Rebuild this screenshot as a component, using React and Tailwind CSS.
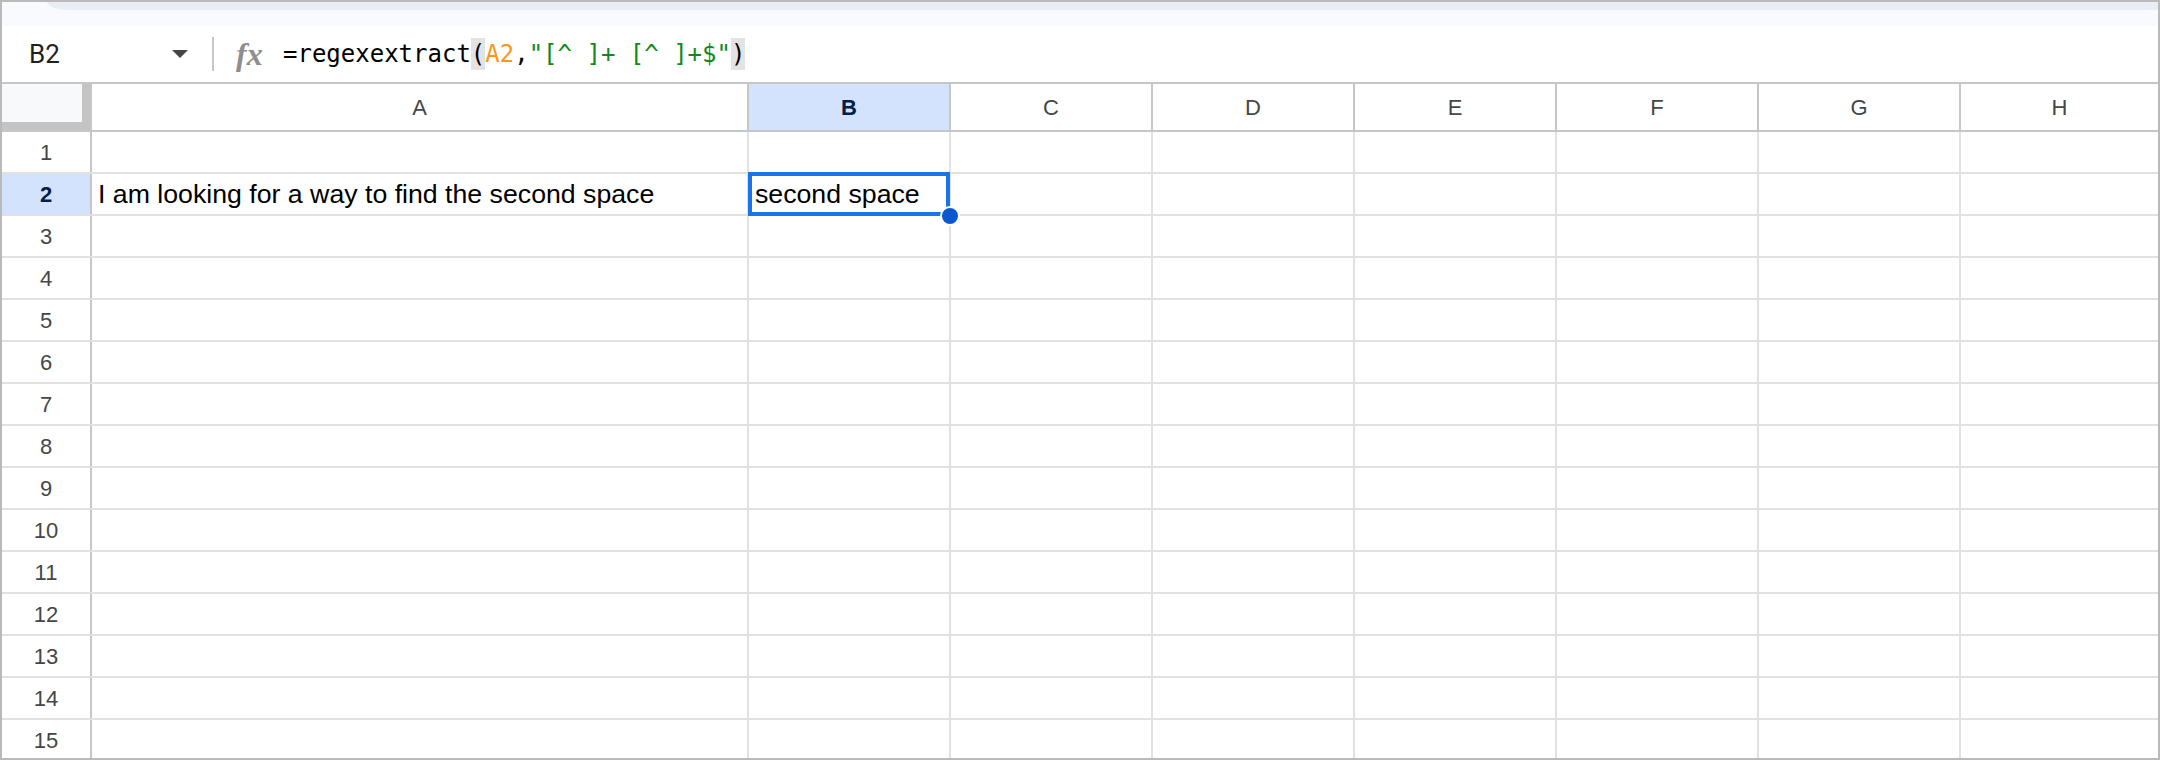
import React from "react";

const COLS = [
  { l: "A", w: "w-[657px]" },
  { l: "B", w: "w-[202px]" },
  { l: "C", w: "w-[202px]" },
  { l: "D", w: "w-[202px]" },
  { l: "E", w: "w-[202px]" },
  { l: "F", w: "w-[202px]" },
  { l: "G", w: "w-[202px]" },
  { l: "H", w: "flex-1" },
];

const SANS = { fontFamily: '"Liberation Sans", Arial, sans-serif' };

function FormulaBar() {
  return (
    <div className="h-[58px] shrink-0 flex items-center border-b-2 border-[#c4c7c5] bg-white">
      <div className="w-[210px] h-full flex items-center justify-between pl-[27px] pr-[24px]">
        <span className="text-[26px] text-[#1f1f1f]" style={{ fontFamily: 'Roboto, "Liberation Sans", sans-serif' }}>
          B2
        </span>
        <svg width="16" height="8" viewBox="0 0 16 8">
          <path d="M0 0 L16 0 L8 8 Z" fill="#444746" />
        </svg>
      </div>
      <div className="w-[2px] h-[34px] bg-[#c4c7c5]" />
      <span
        className="ml-[22px] w-[28px] text-[32px] italic font-bold text-[#8e8e8e] leading-none"
        style={{ fontFamily: '"Liberation Serif", "DejaVu Serif", serif' }}
      >
        fx
      </span>
      <div
        className="ml-[19px] text-[24px] text-black flex items-center whitespace-pre"
        style={{ fontFamily: '"DejaVu Sans Mono", "Liberation Mono", monospace' }}
      >
        <span>=regexextract</span>
        <span className="bg-[#e3e3e3] leading-[32px]">(</span>
        <span className="text-[#f7981d]">A2</span>
        <span>,</span>
        <span className="text-[#0f8a16]">"[^ ]+ [^ ]+$"</span>
        <span className="bg-[#e3e3e3] leading-[32px]">)</span>
      </div>
    </div>
  );
}

function HeaderRow() {
  return (
    <div className="h-[48px] shrink-0 flex border-b-2 border-[#c4c7c5]">
      <div className="w-[90px] h-full border-r-2 border-[#c4c7c5] bg-[#c4c4c4]">
        <div className="w-[80px] h-[38px] bg-[#f8f9fa]" />
      </div>
      {COLS.map((c) => (
        <div
          key={c.l}
          className={`${c.w} h-full flex items-center justify-center text-[22px] ${
            c.l === "B" ? "bg-[#d3e3fd] text-[#041e49] font-bold" : "text-[#444746]"
          } ${c.l === "H" ? "" : "border-r-2 border-[#c4c7c5]"}`}
          style={SANS}
        >
          {c.l}
        </div>
      ))}
    </div>
  );
}

function Row({ n }) {
  const sel = n === 2;
  return (
    <div className={`h-[42px] shrink-0 flex border-b-2 border-[#e1e1e1] ${sel ? "relative z-10" : ""}`}>
      <div
        className={`w-[90px] h-full flex items-center justify-center text-[22px] border-r-2 border-[#c4c7c5] ${
          sel ? "bg-[#d3e3fd] text-[#041e49] font-bold" : "text-[#444746]"
        }`}
        style={SANS}
      >
        {n}
      </div>
      {COLS.map((c) => (
        <div
          key={c.l}
          className={`${c.w} h-full relative flex items-center pl-[6px] text-[26.7px] text-black whitespace-nowrap ${
            c.l === "H" ? "" : "border-r-2 border-[#e1e1e1]"
          }`}
          style={SANS}
        >
          {sel && c.l === "A" && <span>I am looking for a way to find the second space</span>}
          {sel && c.l === "B" && (
            <>
              <span>second space</span>
              <div className="absolute z-10 -top-[2px] -left-[1px] -right-[1px] -bottom-[2px] border-4 border-[#1a73e8]">
                <div className="absolute -right-[14px] -bottom-[14px] w-[20px] h-[20px] rounded-full bg-[#0b57d0] border-2 border-white" />
              </div>
            </>
          )}
        </div>
      ))}
    </div>
  );
}

export default function App() {
  return (
    <div className="w-[2160px] h-[760px] overflow-hidden border-2 border-[#bababa] bg-white flex flex-col">
      <div className="h-[24px] shrink-0 bg-[#f8fafd]">
        <div className="h-[8px] ml-[45px] bg-[#e9eef6] rounded-bl-[24px_8px]" />
      </div>
      <FormulaBar />
      <HeaderRow />
      {Array.from({ length: 15 }, (_, i) => (
        <Row key={i} n={i + 1} />
      ))}
    </div>
  );
}
